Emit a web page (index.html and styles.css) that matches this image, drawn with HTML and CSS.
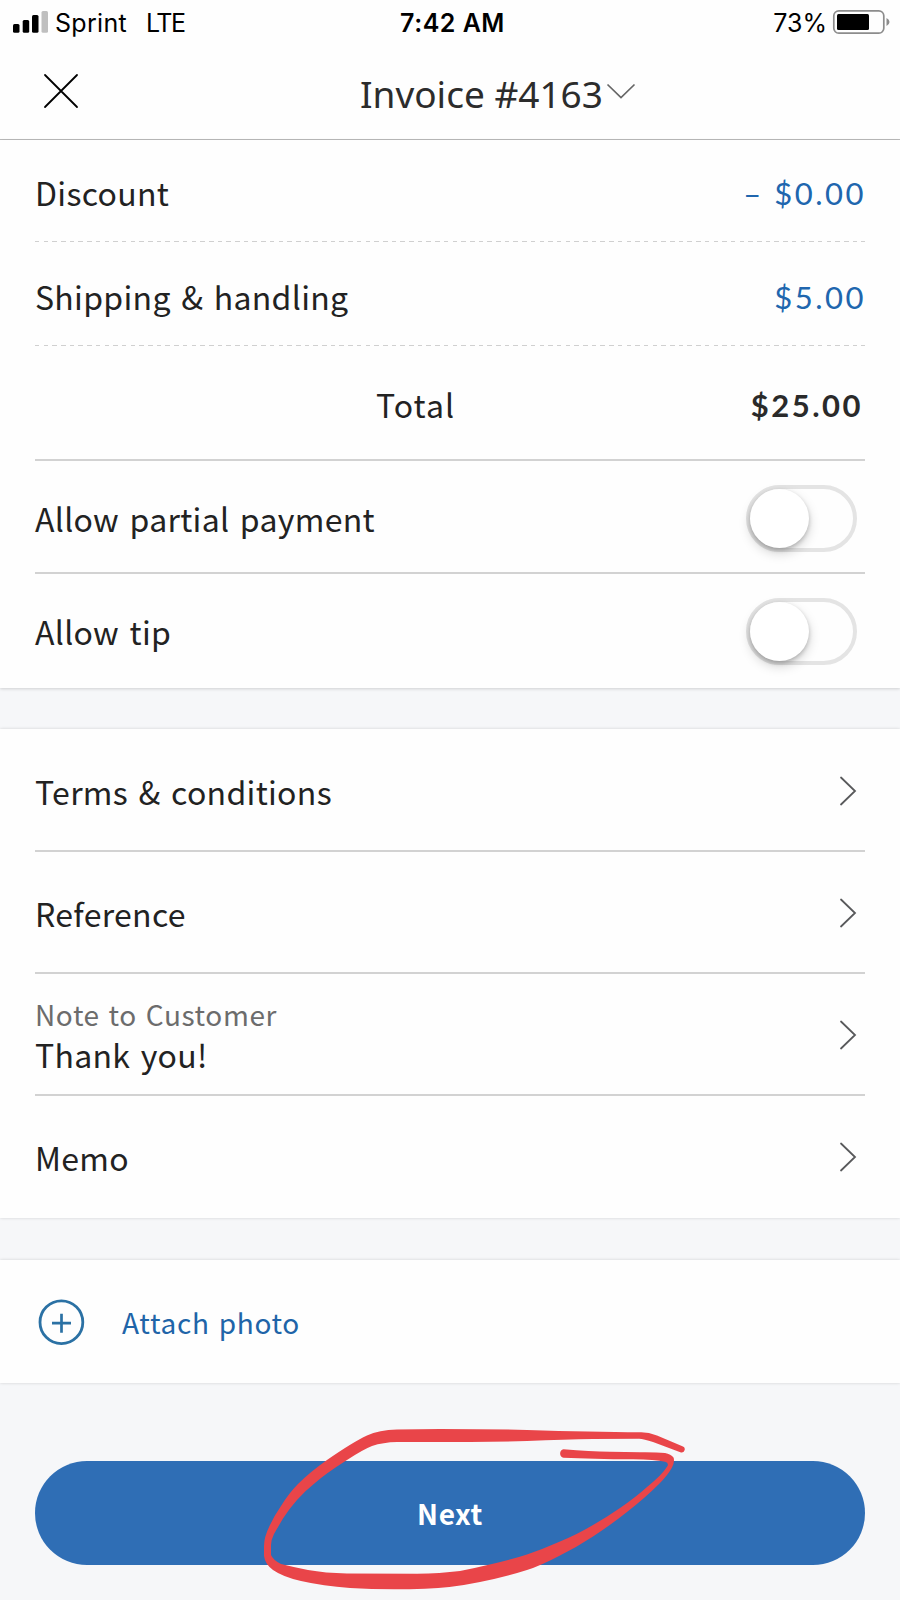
FILE: index.html
```html
<!DOCTYPE html>
<html lang="en">
<head>
    <meta charset="UTF-8">
    <meta name="viewport" content="width=device-width, initial-scale=1.0">
    <title>Invoice #4163</title>
    <link rel="stylesheet" href="styles.css">
</head>
<body>
    <div class="status-bar">
        <div class="status-left">
            <svg class="signal" width="36" height="22" viewBox="0 0 36 22">
                <rect x="0" y="13" width="6.5" height="8.7" rx="1.5"/>
                <rect x="9.7" y="9" width="6.5" height="12.7" rx="1.5"/>
                <rect x="19" y="4" width="6.5" height="17.7" rx="1.5"/>
                <rect x="28.5" y="0" width="6.5" height="21.7" rx="1.5" fill="#bfbfbf"/>
            </svg>
            <span class="carrier">Sprint</span>
            <span class="network">LTE</span>
        </div>
        <div class="time">7:42 AM</div>
        <div class="status-right">
            <span class="percent">73%</span>
            <svg class="battery" width="58" height="26" viewBox="0 0 58 26">
                <rect x="1.8" y="1.8" width="50" height="22.4" rx="5" fill="none" stroke="#8c8c8c" stroke-width="1.7"/>
                <rect x="5" y="5" width="32" height="16" rx="1.5"/>
                <path d="M54.5 9 Q57.5 10.5 57.5 13 T54.5 17 Z" fill="#8c8c8c"/>
            </svg>
        </div>
    </div>

    <div class="header">
        <svg class="close" width="36" height="36" viewBox="0 0 36 36">
            <path d="M2 2 L34 34 M34 2 L2 34"/>
        </svg>
        <h1>Invoice #4163</h1>
        <svg class="chevron-down" width="30" height="17" viewBox="0 0 30 17">
            <path d="M1.5 1.5 L15 14.5 L28.5 1.5"/>
        </svg>
    </div>

    <div class="section">
        <div class="row discount dashed">
            <span class="label">Discount</span>
            <span class="amount">– $0.00</span>
        </div>
        <div class="row shipping dashed">
            <span class="label">Shipping &amp; handling</span>
            <span class="amount">$5.00</span>
        </div>
        <div class="row total">
            <span class="label">Total</span>
            <span class="amount">$25.00</span>
        </div>
        <div class="row option">
            <span class="label">Allow partial payment</span>
            <span class="toggle"><span class="knob"></span></span>
        </div>
        <div class="row option last">
            <span class="label">Allow tip</span>
            <span class="toggle"><span class="knob"></span></span>
        </div>
    </div>

    <div class="section">
        <div class="row link first">
            <span class="label">Terms &amp; conditions</span>
            <svg class="chevron" width="18" height="30" viewBox="0 0 18 30"><path d="M2 1.5 L16 15 L2 28.5"/></svg>
        </div>
        <div class="row link">
            <span class="label">Reference</span>
            <svg class="chevron" width="18" height="30" viewBox="0 0 18 30"><path d="M2 1.5 L16 15 L2 28.5"/></svg>
        </div>
        <div class="row link">
            <div class="note">
                <span class="caption">Note to Customer</span>
                <span class="label thanks">Thank you!</span>
            </div>
            <svg class="chevron" width="18" height="30" viewBox="0 0 18 30"><path d="M2 1.5 L16 15 L2 28.5"/></svg>
        </div>
        <div class="row link last">
            <span class="label">Memo</span>
            <svg class="chevron" width="18" height="30" viewBox="0 0 18 30"><path d="M2 1.5 L16 15 L2 28.5"/></svg>
        </div>
    </div>

    <div class="section attach">
        <svg class="plus" width="48" height="48" viewBox="0 0 48 48">
            <circle cx="24.4" cy="24.2" r="21.4" stroke-width="2.8"/>
            <path d="M15 25.2 H34 M24.500 15.7 V34.7" stroke-width="2.7"/>
        </svg>
        <span class="attach-label">Attach photo</span>
    </div>

    <div class="footer">
        <button class="next-btn">Next</button>
        <!-- hand drawn circle around the button -->
        <svg class="marker" width="440" height="180" viewBox="250 1420 440 180">
            <path d="M683 1446.500 L657 1435.500 Q648 1432 640 1432.300 Q592 1432 527 1430 Q490 1429 440 1429 L397 1429.500 Q379 1430 367 1435.500 Q353 1442 327 1460 Q310 1472 298 1484 Q289 1493 281 1506 Q274 1516 269.500 1526 Q264 1537 264 1546 V1556 Q265 1564 273 1570 Q283 1577 301 1581 Q323 1586 350 1588 Q385 1590 425 1588.700 Q451 1588 480 1582 Q505 1577 527 1570 Q540 1566 560 1555.500 Q577 1547 593 1536.500 Q612 1524 627 1512 Q645 1498 659 1484 Q668 1475 672 1467.500 Q675 1461 673.500 1457.500 Q671 1454 665 1453 Q656 1452 640 1452.200 L610 1451.700 Q590 1451.500 563.500 1449.300 A4.3 4.3 0 0 0 563.500 1457.700 Q592 1459 633 1459.300 Q655 1459.500 665 1461.800 Q669 1463 667.500 1466 Q662 1475 647 1487 Q636 1497 620 1508 Q607 1517 593 1525 Q578 1534 560 1541.500 Q543 1549 527 1554.500 Q510 1560 493 1563.700 Q475 1568 460 1571 Q440 1573.500 417 1573.700 L347 1573.500 Q325 1573 308 1570 Q293 1567 281 1564 Q273 1560 271 1555 V1545 Q271 1540 274 1534 Q278 1527 283 1518.500 Q289 1509 297 1500 Q306 1490 315 1483 Q325 1474 347 1460 Q363 1449.500 372 1446 Q383 1442.300 397 1442 H470 Q500 1442 527 1441 Q565 1439.500 593 1439 L639 1438.700 Q644 1439 653 1442 L681 1452.500 A3.2 3.2 0 0 0 683 1446.500 Z"/>
        </svg>
    </div>
</body>
</html>
```

FILE: styles.css
```css
* {
    box-sizing: border-box;
}

body {
    margin: 0;
    width: 900px;
    height: 1600px;
    overflow: hidden;
    background: #f6f7f9;
    color: #222;
    font-family: "Noto Sans CJK SC", "Noto Sans", sans-serif;
}

svg {
    display: block;
    flex-shrink: 0;
}

/* phone status bar */
.status-bar {
    display: grid;
    grid-template-columns: 1fr auto 1fr;
    align-items: center;
    height: 46px;
    padding: 0 10px 0 13px;
    background: #fefefe;
    color: #000;
    font-family: Inter, sans-serif;
    font-size: 25px;
}

.status-left,
.status-right {
    display: flex;
    align-items: center;
}

.status-right {
    justify-content: flex-end;
}

.signal {
    margin: -2px 6px 0 0;
}

.carrier {
    letter-spacing: 0.3px;
}

.network {
    margin-left: 19px;
    letter-spacing: -1.4px;
}

.time {
    padding-left: 2px;
    font-weight: 600;
    letter-spacing: 0.5px;
}

.battery {
    margin: -3px 0 0 5px;
}

/* header */
.header {
    display: flex;
    align-items: center;
    height: 94px;
    padding-left: 43px;
    background: #fefefe;
    border-bottom: 1px solid #bbb;
}

.close {
    margin-top: -4px;
    fill: none;
    stroke: #000;
    stroke-width: 1.8;
    stroke-linecap: round;
}

.header h1 {
    margin: 3px 0 0 281px;
    font-family: "Noto Sans", sans-serif;
    font-size: 37px;
    font-weight: 400;
    line-height: 50px;
    color: #2c2c2c;
    white-space: nowrap;
}

.chevron-down {
    margin: -2px 0 0 3px;
    fill: none;
    stroke: #666;
    stroke-width: 1.7;
}

/* sections */
.section {
    padding: 0 35px;
    background: #fefefe;
    margin-bottom: 41px;
    box-shadow: 0 0 3px rgba(0, 0, 0, 0.16);
}

.header + .section {
    box-shadow: 0 1px 3px rgba(0, 0, 0, 0.16);
}

.row {
    display: flex;
    align-items: center;
    justify-content: space-between;
    height: 122px;
    border-bottom: 2px solid #d2d2d2;
}

.row.last {
    border-bottom: none;
}

.row.dashed {
    border-bottom: none;
    background: repeating-linear-gradient(to right, #d0d0d0 0, #d0d0d0 4.5px, transparent 4.5px, transparent 8.7px) bottom / 100% 1px no-repeat;
}

.row.discount {
    height: 102px;
    padding-top: 2px;
}

.row.shipping {
    height: 104px;
    padding-top: 3px;
}

.row.total {
    height: 115px;
    padding-top: 3px;
}

.row.option {
    height: 113px;
    padding-top: 2px;
}

.row.option.last {
    height: 114px;
    padding-top: 0;
}

.row.link {
    padding-top: 2px;
}

.row.first {
    height: 123px;
}

.row.link.last {
    padding-top: 0;
}

.label {
    font-size: 32px;
    line-height: 40px;
    letter-spacing: 0.3px;
    word-spacing: 3px;
    white-space: nowrap;
}

.amount {
    margin: 2px -1px 0 0;
    font-family: Lato, sans-serif;
    font-size: 31px;
    letter-spacing: 2.5px;
    color: #2066ae;
}

.total .label {
    margin-left: 341px;
    letter-spacing: 1px;
}

.total .amount {
    margin-right: 2px;
    font-weight: 700;
    color: #2a2a2a;
}

/* switches */
.toggle {
    width: 111px;
    height: 67px;
    margin: 1px 8px 0 0;
    border: 4px solid #e4e4e4;
    border-radius: 34px;
}

.last .toggle {
    margin-top: 0;
}

.knob {
    display: block;
    width: 59px;
    height: 59px;
    border-radius: 50%;
    background: #fff;
    box-shadow: 0 5px 12px rgba(0, 0, 0, 0.18), 0 2px 4px rgba(0, 0, 0, 0.2);
}

.chevron {
    margin-right: 8px;
    fill: none;
    stroke: #58595b;
    stroke-width: 1.8;
    stroke-linecap: round;
}

.note {
    display: flex;
    flex-direction: column;
    margin-top: -2px;
}

.caption {
    font-size: 28px;
    line-height: 40px;
    letter-spacing: 0.6px;
    word-spacing: 2px;
    color: #6c6c6c;
}

/* attach */
.attach {
    display: flex;
    align-items: center;
    height: 123px;
    margin: 42px 0 0;
}

.plus {
    margin-left: 2px;
    fill: none;
    stroke: #2b71a4;
}

.attach-label {
    margin-left: 37px;
    font-size: 28px;
    letter-spacing: 0.7px;
    word-spacing: 2px;
    color: #2064a8;
}

/* footer */
.footer {
    position: relative;
    height: 217px;
    padding: 78px 35px 0;
}

.next-btn {
    display: block;
    width: 830px;
    height: 104px;
    padding: 0;
    border: none;
    border-radius: 52px;
    background: #2f6eb5;
    color: #fff;
    font-family: "Noto Sans CJK SC", sans-serif;
    font-size: 28px;
    font-weight: 700;
    letter-spacing: 0.6px;
    cursor: pointer;
}

.marker {
    position: absolute;
    left: 250px;
    top: 37px;
    fill: #e94549;
    pointer-events: none;
}
```
